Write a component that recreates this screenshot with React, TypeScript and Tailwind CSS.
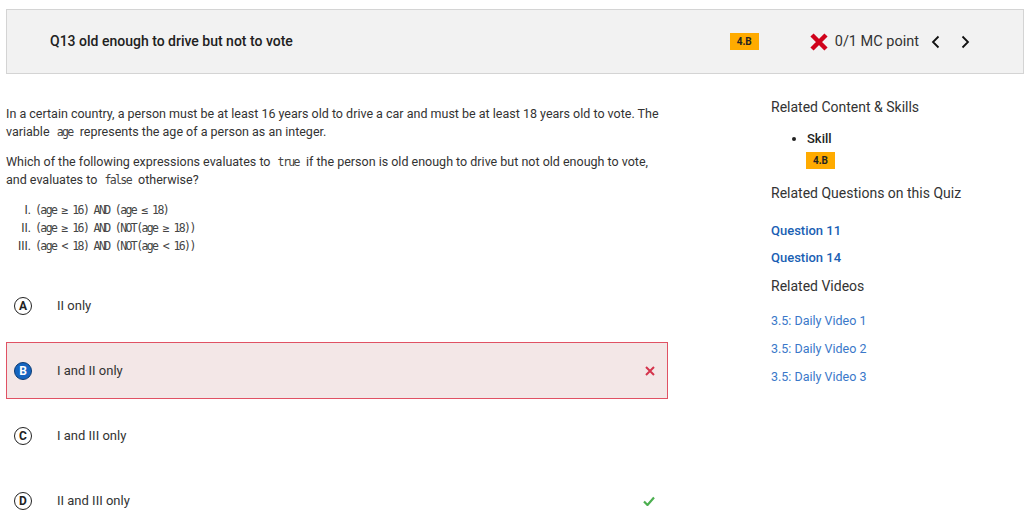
import React from 'react';

const options = [
  { letter: 'A', text: 'II only', state: 'none' },
  { letter: 'B', text: 'I and II only', state: 'wrong' },
  { letter: 'C', text: 'I and III only', state: 'none' },
  { letter: 'D', text: 'II and III only', state: 'correct' },
];

const codeLines = [
  { n: 'I.', code: '(age ≥ 16) AND (age ≤ 18)' },
  { n: 'II.', code: '(age ≥ 16) AND (NOT(age ≥ 18))' },
  { n: 'III.', code: '(age < 18) AND (NOT(age < 16))' },
];

const Badge = () => (
  <span className="inline-flex items-center justify-center w-[29px] h-[17px] bg-[#ffab00] text-[10px] font-bold text-[#222]">
    4.B
  </span>
);

const Code = ({ children }: { children: React.ReactNode }) => (
  <code className="font-['DejaVu_Sans_Mono',monospace] text-[11.5px] leading-[14px] tracking-[-1.6px] text-[#444] px-[4px]">
    {children}
  </code>
);

const LetterCircle = ({ letter, selected }: { letter: string; selected: boolean }) => (
  <span
    className={
      selected
        ? 'flex items-center justify-center w-[18px] h-[18px] rounded-full border-[1.5px] border-[#0d3c73] bg-[#1565c0] text-white text-[12px] font-bold'
        : 'flex items-center justify-center w-[18px] h-[18px] rounded-full border-[1.5px] border-[#222] bg-white text-[#222] text-[12px] font-bold'
    }
  >
    {letter}
  </span>
);

export default function App() {
  return (
    <div className="w-[1029px] h-[532px] bg-white overflow-hidden font-['Roboto',sans-serif] text-[#212121]">
      <div className="pt-[9px] pl-[6px] pr-[5px]">
        <div className="flex items-center h-[65px] bg-[#f2f2f2] border border-[#d4d4d4]">
          <div className="pl-[43px] text-[14px] font-medium text-[#212121] flex-1">
            Q13 old enough to drive but not to vote
          </div>
          <Badge />
          <div className="flex items-center ml-[50px]">
            <svg width="20" height="20" viewBox="0 0 20 20">
              <path d="M3 3 L17 17 M17 3 L3 17" stroke="#d0021b" strokeWidth="4.5" strokeLinecap="butt" />
            </svg>
            <span className="ml-[6px] text-[14.5px] text-[#333]">0/1 MC point</span>
            <svg className="ml-[12px]" width="10" height="14" viewBox="0 0 10 14">
              <path d="M7.5 1.5 L2 7 L7.5 12.5" fill="none" stroke="#111" strokeWidth="1.8" />
            </svg>
            <svg className="ml-[19px]" width="10" height="14" viewBox="0 0 10 14">
              <path d="M2.5 1.5 L8 7 L2.5 12.5" fill="none" stroke="#111" strokeWidth="1.8" />
            </svg>
          </div>
          <div className="w-[53px]" />
        </div>
      </div>

      <div className="flex pl-[6px]">
        <div className="w-[662px]">
          <div className="pt-[31px] text-[12.5px] leading-[18px] text-[#333]">
            <p>
              In a certain country, a person must be at least 16 years old to drive a car and must be at least 18 years old to vote. The variable{' '}
              <Code>age</Code> represents the age of a person as an integer.
            </p>
            <p className="mt-[12px]">
              Which of the following expressions evaluates to <Code>true</Code> if the person is old enough to drive but not old enough to vote, and evaluates to{' '}
              <Code>false</Code> otherwise?
            </p>
            <div className="mt-[12px] flex flex-col">
              {codeLines.map((line) => (
                <div key={line.n} className="flex items-center h-[18px]">
                  <span className="w-[25px] text-right text-[12px]">{line.n}</span>
                  <span className="ml-[4px] font-['DejaVu_Sans_Mono',monospace] text-[11.5px] tracking-[-1.6px] text-[#444]">{line.code}</span>
                </div>
              ))}
            </div>
          </div>

          <div className="mt-[22px] flex flex-col gap-[8px]">
            {options.map((o) => (
              <div
                key={o.letter}
                className={
                  o.state === 'wrong'
                    ? 'flex items-center h-[57px] pl-[7px] pr-[12px] bg-[#f3e7e7] border border-[#e05264]'
                    : 'flex items-center h-[57px] pl-[7px] pr-[12px] border border-transparent'
                }
              >
                <LetterCircle letter={o.letter} selected={o.state === 'wrong'} />
                <span className="ml-[25px] text-[13px] text-[#333] flex-1">{o.text}</span>
                {o.state === 'wrong' && (
                  <svg width="10" height="10" viewBox="0 0 10 10">
                    <path d="M1 1 L9 9 M9 1 L1 9" stroke="#d4344c" strokeWidth="2" />
                  </svg>
                )}
                {o.state === 'correct' && (
                  <svg width="12" height="10" viewBox="0 0 12 10">
                    <path d="M1 5.5 L4.5 9 L11 1.5" fill="none" stroke="#4caf50" strokeWidth="2.2" />
                  </svg>
                )}
              </div>
            ))}
          </div>
        </div>

        <div className="ml-[103px] pt-[23px] w-[240px]">
          <h3 className="text-[14px] text-[#333] leading-[20px]">Related Content &amp; Skills</h3>
          <ul className="mt-[13px] ml-[20px] list-disc pl-[16px]">
            <li className="text-[13px] font-medium text-[#222] leading-[17px]">Skill</li>
          </ul>
          <div className="ml-[35px] mt-0">
            <Badge />
          </div>
          <h3 className="mt-[12px] text-[14px] text-[#333] leading-[20px]">Related Questions on this Quiz</h3>
          <div className="mt-[19px] text-[13px] font-medium text-[#1a5fb4] leading-[17px]">Question 11</div>
          <div className="mt-[10px] text-[13px] font-medium text-[#1a5fb4] leading-[17px]">Question 14</div>
          <h3 className="mt-[10px] text-[14px] text-[#333] leading-[20px]">Related Videos</h3>
          <div className="mt-[16px] flex flex-col gap-[11px] text-[12.5px] text-[#3a78c9] leading-[17px]">
            <span>3.5: Daily Video 1</span>
            <span>3.5: Daily Video 2</span>
            <span>3.5: Daily Video 3</span>
          </div>
        </div>
      </div>
    </div>
  );
}
